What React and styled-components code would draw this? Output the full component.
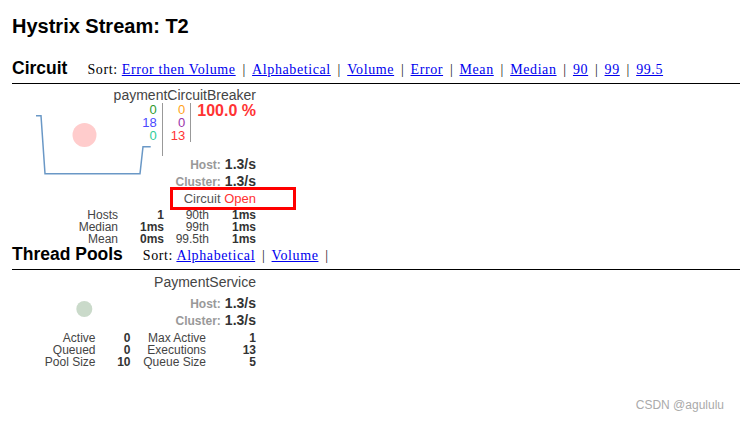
import styled, { createGlobalStyle } from "styled-components";

const GlobalStyle = createGlobalStyle`
  *, *::before, *::after { box-sizing: border-box; }
  html, body { margin: 0; padding: 0; background: #ffffff; }
  body { font-family: "Liberation Sans", Arial, sans-serif; color: #000; }
`;

const Page = styled.div`
  position: relative;
  height: 421px;
  padding-left: 12px;
  overflow: hidden;
`;

const Title = styled.h1`
  margin: 0;
  padding-top: 14px;
  font-size: 20px;
  line-height: 24px;
  font-weight: 700;
`;

const SectionHeader = styled.div`
  display: flex;
  align-items: baseline;
  margin-top: ${(p) => p.$top || 0}px;
`;

const Heading = styled.h2`
  margin: 0;
  font-size: 17.5px;
  line-height: 18px;
  font-weight: 700;
`;

const Sort = styled.div`
  margin-left: 20px;
  font-family: "Liberation Serif", "Times New Roman", serif;
  font-size: 14px;
  line-height: 18px;
  letter-spacing: 0.6px;
`;

const SortLink = styled.a`
  color: #0000ee;
  text-decoration: underline;
  cursor: pointer;
`;

const Sep = styled.span`
  margin: 0 6.8px;
  letter-spacing: 0;
  color: #222;
`;

const Rule = styled.div`
  height: 1px;
  margin-top: 4px;
  background: #000;
`;

const Card = styled.div`
  width: 244px;
  padding-top: ${(p) => p.$top || 3}px;
`;

const Name = styled.div`
  text-align: right;
  font-size: 14px;
  line-height: 16px;
  color: #444;
`;

const Body = styled.div`
  display: grid;
  grid-template-columns: 118px 1fr;
  margin-top: ${(p) => p.$top || 0}px;
`;

const Chart = styled.svg`
  display: block;
  overflow: visible;
`;

const Side = styled.div`
  display: flex;
  flex-direction: column;
  align-items: flex-end;
`;

const Counters = styled.div`
  display: flex;
  align-items: flex-start;
`;

const CounterCol = styled.div`
  min-height: ${(p) => p.$height}px;
  padding: 0 5px 0 8px;
  border-right: 1px solid #999;
  text-align: right;
`;

const Count = styled.div`
  font-size: 13px;
  line-height: 13px;
  color: ${(p) => p.$color};
`;

const ErrorPct = styled.div`
  margin-left: 6px;
  font-size: 16px;
  line-height: 16px;
  font-weight: 700;
  color: #ff3333;
`;

const Rate = styled.div`
  display: flex;
  align-items: baseline;
  justify-content: flex-end;
  height: 17px;
  line-height: 17px;
`;

const RateLabel = styled.span`
  margin-right: 4px;
  font-size: 12px;
  font-weight: 700;
  color: #999;
`;

const RateValue = styled.span`
  font-size: 14px;
  font-weight: 700;
  color: #333;
`;

const Status = styled.div`
  position: relative;
  margin-top: 0.5px;
  text-align: right;
  font-size: 13px;
  line-height: 15px;
  color: #555;
`;

const Open = styled.span`
  color: #ff3333;
`;

const Highlight = styled.span`
  position: absolute;
  top: -4px;
  right: -40px;
  width: 126px;
  height: 23px;
  border: 3px solid #ff0000;
`;

const Stats = styled.div`
  display: grid;
  grid-template-columns: ${(p) => p.$cols};
  margin-top: ${(p) => p.$top || 3}px;
  font-size: 12px;
  line-height: 12px;
  text-align: right;
`;

const StatLabel = styled.span`
  color: #444;
`;

const StatValue = styled.span`
  font-weight: 700;
  color: #333;
`;

const Watermark = styled.div`
  position: absolute;
  right: 16px;
  bottom: 9px;
  font-size: 12px;
  line-height: 14px;
  color: #aaa;
`;

const circuitSorts = [
  "Error then Volume",
  "Alphabetical",
  "Volume",
  "Error",
  "Mean",
  "Median",
  "90",
  "99",
  "99.5",
];

const circuitStats = [
  ["Hosts", "1", "90th", "1ms"],
  ["Median", "1ms", "99th", "1ms"],
  ["Mean", "0ms", "99.5th", "1ms"],
];

const poolStats = [
  ["Active", "0", "Max Active", "1"],
  ["Queued", "0", "Executions", "13"],
  ["Pool Size", "10", "Queue Size", "5"],
];

const StatRows = ({ rows }) =>
  rows.map((r) => [
    <StatLabel key={r[0]}>{r[0]}</StatLabel>,
    <StatValue key={r[0] + "v"}>{r[1]}</StatValue>,
    <StatLabel key={r[2]}>{r[2]}</StatLabel>,
    <StatValue key={r[2] + "v"}>{r[3]}</StatValue>,
  ]);

const App = () => {
  return (
    <Page>
      <GlobalStyle />
      <Title>Hystrix Stream: T2</Title>

      <SectionHeader $top={21}>
        <Heading>Circuit</Heading>
        <Sort>
          Sort:{" "}
          {circuitSorts.map((s, i) => (
            <span key={s}>
              {i > 0 && <Sep>|</Sep>}
              <SortLink>{s}</SortLink>
            </span>
          ))}
        </Sort>
      </SectionHeader>
      <Rule />

      <Card>
        <Name>paymentCircuitBreaker</Name>
        <Body>
          <Chart width="118" height="87">
            <circle cx="72.5" cy="32" r="12" fill="#ffcccc" />
            <polyline
              points="24,12.7 29,12.7 33,70.7 128,70.7 131,43.7 138.7,43.7"
              fill="none"
              stroke="#6a98c6"
              strokeWidth="1.5"
            />
          </Chart>
          <Side>
            <Counters>
              <CounterCol $height={53}>
                <Count $color="#2e9a2e">0</Count>
                <Count $color="#4a4aff">18</Count>
                <Count $color="#2fcc99">0</Count>
              </CounterCol>
              <CounterCol $height={39}>
                <Count $color="#ffa31a">0</Count>
                <Count $color="#9933aa">0</Count>
                <Count $color="#ff3333">13</Count>
              </CounterCol>
              <ErrorPct>100.0 %</ErrorPct>
            </Counters>
            <Rate>
              <RateLabel>Host:</RateLabel>
              <RateValue>1.3/s</RateValue>
            </Rate>
            <Rate>
              <RateLabel>Cluster:</RateLabel>
              <RateValue>1.3/s</RateValue>
            </Rate>
          </Side>
        </Body>
        <Status>
          Circuit <Open>Open</Open>
          <Highlight />
        </Status>
        <Stats $cols="106px 46px 45px 47px">
          <StatRows rows={circuitStats} />
        </Stats>
      </Card>

      <SectionHeader>
        <Heading>Thread Pools</Heading>
        <Sort>
          Sort: <SortLink>Alphabetical</SortLink>
          <Sep>|</Sep>
          <SortLink>Volume</SortLink>
          <Sep>|</Sep>
        </Sort>
      </SectionHeader>
      <Rule />

      <Card $top={4}>
        <Name>PaymentService</Name>
        <Body $top={5}>
          <Chart width="118" height="34">
            <circle cx="72.3" cy="14" r="8" fill="#cadaca" />
          </Chart>
          <Side>
            <Rate>
              <RateLabel>Host:</RateLabel>
              <RateValue>1.3/s</RateValue>
            </Rate>
            <Rate>
              <RateLabel>Cluster:</RateLabel>
              <RateValue>1.3/s</RateValue>
            </Rate>
          </Side>
        </Body>
        <Stats $cols="83.5px 35px 75.5px 50px" $top={3.5}>
          <StatRows rows={poolStats} />
        </Stats>
      </Card>

      <Watermark>CSDN @agululu</Watermark>
    </Page>
  );
};

export default App;
